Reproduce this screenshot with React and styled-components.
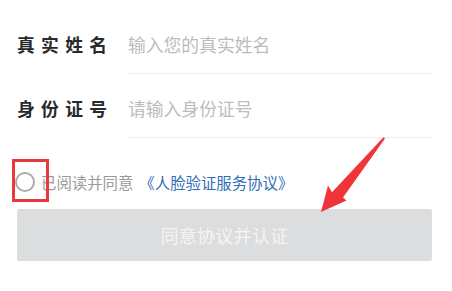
import React, { useState } from "react";
import styled, { createGlobalStyle } from "styled-components";

const GlobalStyle = createGlobalStyle`
  html, body {
    margin: 0;
    padding: 0;
    background: #fff;
    font-family: "Noto Sans CJK SC", "Noto Sans", sans-serif;
  }
`;

const Page = styled.div`
  position: relative;
  width: 452px;
  height: 291px;
  overflow: hidden;
  padding: 10px 20px 0 17px;
  box-sizing: border-box;
`;

const Row = styled.div`
  display: flex;
  height: 64px;
`;

const Label = styled.div`
  width: 111px;
  display: flex;
  align-items: center;
  padding-top: 4px;
  font-size: 17.8px;
  font-weight: 700;
  letter-spacing: 6.3px;
  color: #2a2a2a;
  white-space: nowrap;
`;

const Field = styled.div`
  flex: 1;
  display: flex;
  align-items: center;
  padding-top: 4px;
  border-bottom: 1px solid #eeeeee;

  > input {
    all: unset;
    width: 100%;
    font-size: 17.8px;
    color: #333;
  }

  > input::placeholder {
    color: #bcbcbc;
  }
`;

const Agree = styled.label`
  display: flex;
  align-items: center;
  height: 24px;
  margin-top: 32px;
  margin-left: -2px;
  font-size: 15.4px;
  color: #9a9a9a;
  white-space: nowrap;
  cursor: pointer;
`;

const Radio = styled.span`
  width: 16px;
  height: 16px;
  border-radius: 50%;
  border: 2px solid ${(p) => (p.checked ? "#2f6eb5" : "#ababab")};
  background: ${(p) => (p.checked ? "#2f6eb5" : "transparent")};
  margin-right: 6px;
  flex-shrink: 0;
`;

const Link = styled.span`
  color: #2f6eb5;
  margin-left: 6px;
`;

const Submit = styled.button`
  all: unset;
  display: flex;
  align-items: center;
  justify-content: center;
  width: 415px;
  height: 52px;
  margin-top: 15px;
  border-radius: 2px;
  background: #dcdddf;
  color: #f4f4f4;
  font-size: 18px;
  letter-spacing: 0.3px;
`;

const Marker = styled.div`
  position: absolute;
  left: 12px;
  top: 159px;
  width: 37px;
  height: 43px;
  border: 3px solid #e8393c;
  box-sizing: border-box;
  pointer-events: none;
`;

const Arrow = styled.svg`
  position: absolute;
  left: 0;
  top: 0;
  pointer-events: none;
`;

export default function App() {
  const [checked, setChecked] = useState(false);

  return (
    <Page>
      <GlobalStyle />
      <Row>
        <Label>真实姓名</Label>
        <Field>
          <input placeholder="输入您的真实姓名" />
        </Field>
      </Row>
      <Row>
        <Label>身份证号</Label>
        <Field>
          <input placeholder="请输入身份证号" />
        </Field>
      </Row>
      <Agree onClick={() => setChecked(!checked)}>
        <Radio checked={checked} />
        已阅读并同意
        <Link>《人脸验证服务协议》</Link>
      </Agree>
      <Submit>同意协议并认证</Submit>

      <Marker />
      <Arrow width="452" height="291" viewBox="0 0 452 291">
        <polygon
          points="383.4,137.2 385,138.6 343,197.5 346.5,200.5 321,212 328,185.5 332,192.2"
          fill="#f0353a"
        />
      </Arrow>
    </Page>
  );
}
